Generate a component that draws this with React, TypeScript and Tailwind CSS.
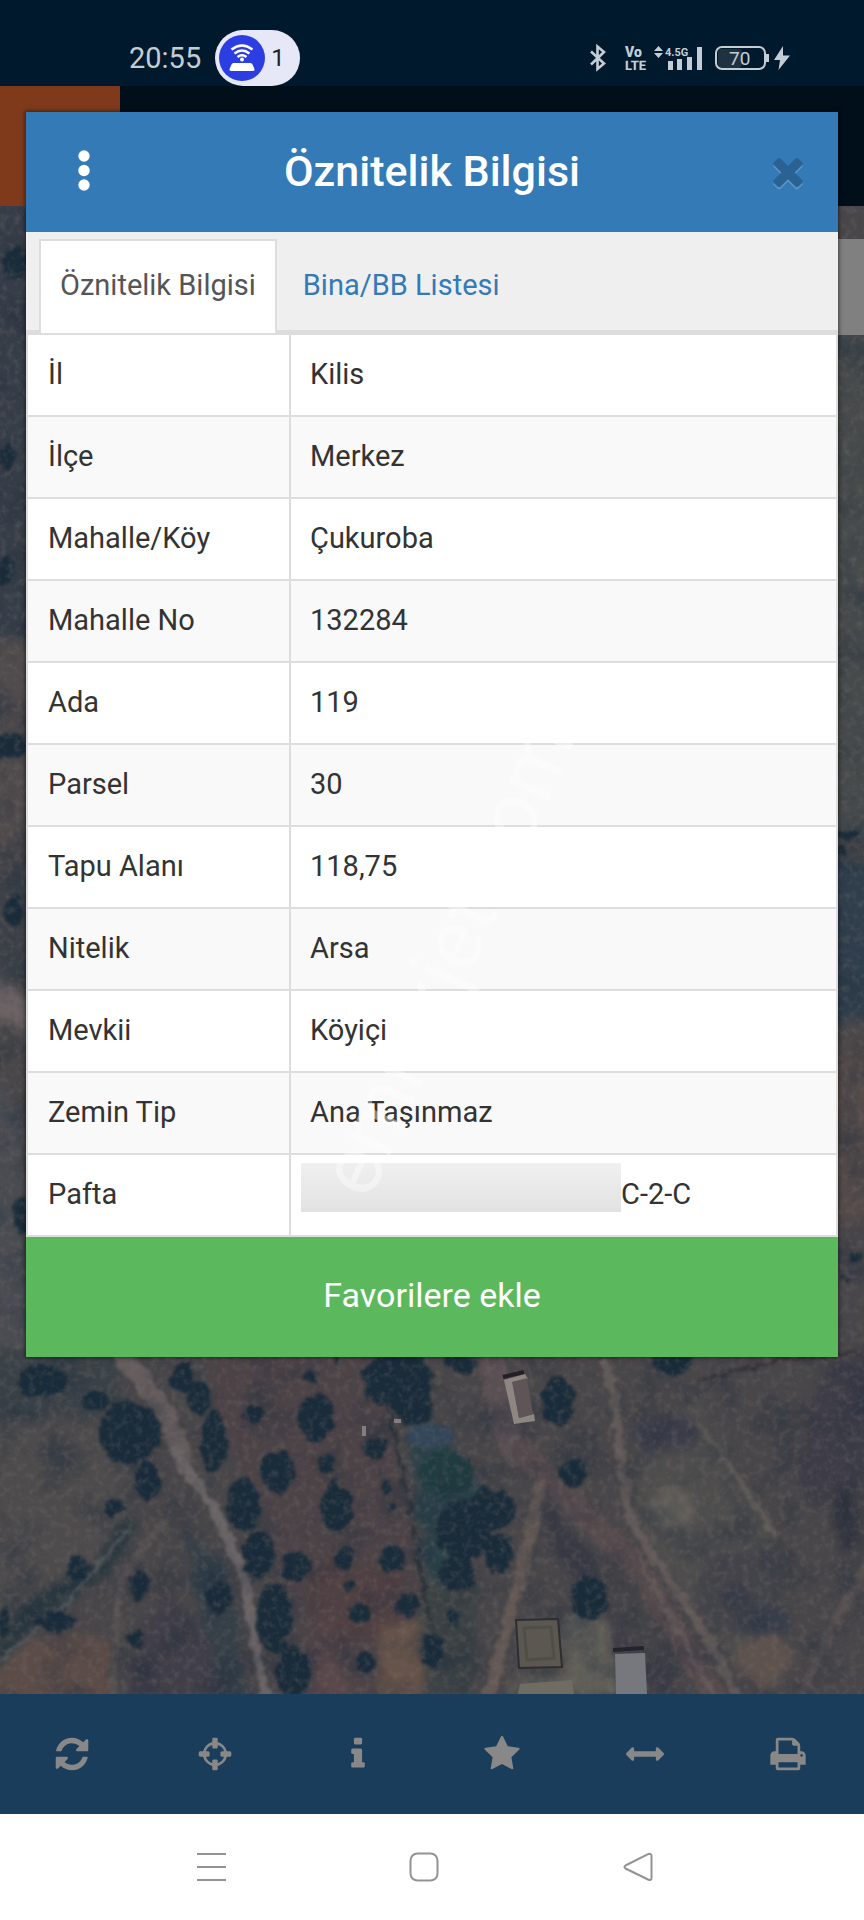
import React, { useState } from "react";

const rows = [
  ["İl", "Kilis"],
  ["İlçe", "Merkez"],
  ["Mahalle/Köy", "Çukuroba"],
  ["Mahalle No", "132284"],
  ["Ada", "119"],
  ["Parsel", "30"],
  ["Tapu Alanı", "118,75"],
  ["Nitelik", "Arsa"],
  ["Mevkii", "Köyiçi"],
  ["Zemin Tip", "Ana Taşınmaz"],
  ["Pafta", "C-2-C"],
];

const tools = [
  {
    label: "Yenile",
    path: "M1639 1056q0 5-1 7-64 268-268 434.5t-478 166.5q-146 0-282.5-55t-243.5-157l-129 129q-19 19-45 19t-45-19-19-45v-448q0-26 19-45t45-19h448q26 0 45 19t19 45-19 45l-137 137q71 66 161 102t187 36q134 0 250-65t186-179q11-17 53-117 8-23 30-23h192q13 0 22.5 9.5t9.5 22.5zm25-800v448q0 26-19 45t-45 19h-448q-26 0-45-19t-19-45 19-45l138-138q-148-137-349-137-134 0-250 65t-186 179q-11 17-53 117-8 23-30 23h-199q-13 0-22.5-9.5t-9.5-22.5v-7q65-268 270-434.5t480-166.5q146 0 284 55.5t245 156.5l130-129q19-19 45-19t45 19 19 45z",
  },
  {
    label: "Konum",
    path: "M1325 1024h-109q-26 0-45-19t-19-45v-128q0-26 19-45t45-19h109q-32-108-112.5-188.5t-188.5-112.5v109q0 26-19 45t-45 19h-128q-26 0-45-19t-19-45v-109q-108 32-188.5 112.5t-112.5 188.5h109q26 0 45 19t19 45v128q0 26-19 45t-45 19h-109q32 108 112.5 188.5t188.5 112.5v-109q0-26 19-45t45-19h128q26 0 45 19t19 45v109q108-32 188.5-112.5t112.5-188.5zm339-192v128q0 26-19 45t-45 19h-143q-37 161-154.5 278.5t-278.5 154.5v143q0 26-19 45t-45 19h-128q-26 0-45-19t-19-45v-143q-161-37-278.5-154.5t-154.5-278.5h-143q-26 0-45-19t-19-45v-128q0-26 19-45t45-19h143q37-161 154.5-278.5t278.5-154.5v-143q0-26 19-45t45-19h128q26 0 45 19t19 45v143q161 37 278.5 154.5t154.5 278.5h143q26 0 45 19t19 45z",
  },
  {
    label: "Bilgi",
    path: "M1216 1344v128q0 26-19 45t-45 19h-512q-26 0-45-19t-19-45v-128q0-26 19-45t45-19h64v-384h-64q-26 0-45-19t-19-45v-128q0-26 19-45t45-19h384q26 0 45 19t19 45v576h64q26 0 45 19t19 45zm-128-1152v192q0 26-19 45t-45 19h-256q-26 0-45-19t-19-45v-192q0-26 19-45t45-19h256q26 0 45 19t19 45z",
  },
  {
    label: "Favoriler",
    path: "M1728 647q0 22-26 48l-363 354 86 500q1 7 1 20 0 21-10.5 35.5t-30.5 14.5q-19 0-40-12l-449-236-449 236q-22 12-40 12-21 0-31.5-14.5t-10.5-35.5q0-6 2-20l86-500-364-354q-25-27-25-48 0-37 56-46l502-73 225-455q19-41 49-41t49 41l225 455 502 73q56 9 56 46z",
  },
  {
    label: "Ölçüm",
    path: "M1792 896q0 26-19 45l-256 256q-19 19-45 19t-45-19-19-45v-128h-1024v128q0 26-19 45t-45 19-45-19l-256-256q-19-19-19-45t19-45l256-256q19-19 45-19t45 19 19 45v128h1024v-128q0-26 19-45t45-19 45 19l256 256q19 19 19 45z",
  },
  {
    label: "Yazdır",
    path: "M448 1536h896v-256h-896v256zm0-640h896v-384h-160q-40 0-68-28t-28-68v-160h-640v640zm1152 64q0-26-19-45t-45-19-45 19-19 45 19 45 45 19 45-19 19-45zm128 0v416q0 13-9.5 22.5t-22.5 9.5h-224v160q0 40-28 68t-68 28h-960q-40 0-68-28t-28-68v-160h-224q-13 0-22.5-9.5t-9.5-22.5v-416q0-79 56.5-135.5t135.5-56.5h64v-544q0-40 28-68t68-28h672q40 0 88 20t76 48l152 152q28 28 48 76t20 88v256h64q79 0 135.5 56.5t56.5 135.5z",
  },
];

// cx, cy, rx, ry
const trees = [
  [41, 1380, 26, 17], [94, 1400, 16, 10], [129, 1432, 32, 32], [182, 1377, 13, 16],
  [198, 1397, 12, 18], [212, 1440, 14, 32], [253, 1415, 10, 11], [315, 1417, 19, 24],
  [276, 1470, 19, 21], [325, 1463, 9, 10], [335, 1507, 17, 23], [375, 1448, 13, 13],
  [310, 1376, 7, 6], [242, 1503, 18, 28], [258, 1553, 18, 24], [295, 1565, 16, 17],
  [343, 1558, 10, 12], [392, 1557, 13, 14], [359, 1612, 11, 12], [407, 1605, 12, 12],
  [364, 1660, 10, 11], [274, 1617, 18, 38], [292, 1670, 18, 26], [397, 1378, 36, 30],
  [413, 1407, 20, 18], [463, 1530, 28, 32], [490, 1508, 26, 22], [498, 1553, 16, 20],
  [457, 1573, 19, 18], [557, 1400, 17, 26], [573, 1472, 15, 15], [588, 1597, 20, 22],
  [113, 1506, 11, 9], [146, 1480, 14, 20], [77, 1568, 12, 14], [138, 1585, 12, 14],
  [217, 1597, 14, 16], [55, 1620, 22, 12], [385, 1486, 6, 6], [390, 1507, 5, 6],
  [347, 1583, 6, 6], [335, 1358, 4, 8], [335, 1484, 4, 8], [367, 1396, 4, 5],
  [135, 1638, 8, 9], [3, 1622, 6, 16], [672, 1360, 22, 14], [460, 1362, 16, 12],
  [14, 262, 14, 18], [8, 745, 20, 14], [12, 910, 12, 16], [4, 570, 10, 16],
  [20, 1215, 9, 20], [848, 834, 12, 6], [840, 850, 8, 6], [855, 1256, 6, 5],
  [843, 1278, 4, 4], [6, 455, 9, 14], [452, 1616, 8, 9], [432, 1650, 12, 18],
];

const MapView = () => (
  <svg
    className="absolute inset-0 h-full w-full"
    viewBox="0 206 864 1488"
    preserveAspectRatio="xMidYMid slice"
    aria-hidden="true"
  >
    <defs>
      <filter id="rough" x="-5%" y="-5%" width="110%" height="110%" colorInterpolationFilters="sRGB">
        <feTurbulence type="fractalNoise" baseFrequency="0.09" numOctaves="3" seed="4" result="n" />
        <feDisplacementMap in="SourceGraphic" in2="n" scale="12" xChannelSelector="R" yChannelSelector="G" />
        <feGaussianBlur stdDeviation="1.6" />
      </filter>
      <filter id="soft" x="-5%" y="-5%" width="110%" height="110%" colorInterpolationFilters="sRGB">
        <feTurbulence type="fractalNoise" baseFrequency="0.04" numOctaves="3" seed="9" result="n" />
        <feDisplacementMap in="SourceGraphic" in2="n" scale="22" xChannelSelector="R" yChannelSelector="G" />
        <feGaussianBlur stdDeviation="4" />
      </filter>
      <filter id="dark" x="0" y="0" width="100%" height="100%" colorInterpolationFilters="sRGB">
        <feTurbulence type="fractalNoise" baseFrequency="0.025" numOctaves="5" seed="21" />
        <feColorMatrix values="0 0 0 0 0.1  0 0 0 0 0.16  0 0 0 0 0.23  2.4 0 0 0 -1.1" />
      </filter>
      <filter id="light" x="0" y="0" width="100%" height="100%" colorInterpolationFilters="sRGB">
        <feTurbulence type="fractalNoise" baseFrequency="0.14" numOctaves="3" seed="33" />
        <feColorMatrix values="0 0 0 0 0.5  0 0 0 0 0.46  0 0 0 0 0.44  0 2.2 0 0 -1" />
      </filter>
    </defs>

    <rect y="206" width="864" height="1488" fill="#484649" />

    <g filter="url(#soft)">
      <path d="M-10 200h60v500h-60z" fill="#373d48" />
      <path d="M-10 640h60v60h-60zM-10 760h60v110h-60z" fill="#504b4c" />
      <path d="M-10 870h60v110h-60z" fill="#3e4248" />
      <path d="M-10 970L40 1010V1050L-10 1010z" fill="#6b6264" />
      <path d="M-10 1060L20 1110L24 1290L50 1350H-10z" fill="#4a4c52" />
      <path d="M830 330h50v510h-50z" fill="#464a4b" />
      <path d="M830 860h50v160h-50z" fill="#2f3e4c" />
      <path d="M830 1040h50v180h-50z" fill="#534a49" />

      <path d="M-10 1418L94 1425L132 1473L132 1527L88 1567L-10 1632z" fill="#4d4b4c" />
      <path d="M204 1350H364L397 1440L424 1607L418 1710H320L297 1623L264 1520L220 1423z" fill="#4c4347" />
      <path d="M300 1560L400 1570L410 1640L320 1650z" fill="#4f4043" />
      <path d="M330 1610L350 1710H306z" fill="#59474a" />
      <path d="M380 1628L426 1618L420 1710H376z" fill="#665349" />
      <path d="M-10 1655L33 1638L112 1632L112 1710H-10z" fill="#5b4c48" />
      <path d="M165 1592L208 1640L226 1710H126L140 1630z" fill="#403e48" />
      <path d="M180 1525L230 1570L246 1710H226L200 1610z" fill="#343f48" />
      <path d="M134 1520L100 1570L34 1610L-6 1662" fill="none" stroke="#2b383f" strokeWidth="20" />
      <path d="M408 1430L450 1440L490 1500L440 1600L424 1560z" fill="#2b4149" />
      <path d="M420 1580L480 1590L470 1700H424z" fill="#3d4345" />
      <path d="M-10 1350H110L130 1410L60 1420L-10 1416z" fill="#3b4247" />
      <path d="M640 1430L700 1400L790 1570L780 1694L720 1640L640 1540z" fill="#4e4d4d" />
      <ellipse cx="672" cy="1508" rx="22" ry="22" fill="#605d59" />
      <ellipse cx="666" cy="1433" rx="34" ry="20" fill="#3e3f4a" />
      <ellipse cx="740" cy="1590" rx="46" ry="40" fill="#43434a" />
      <ellipse cx="772" cy="1625" rx="18" ry="20" fill="#383e4a" />
      <path d="M838 1360Q796 1420 800 1490Q830 1530 870 1480V1350z" fill="#3e3d47" />
      <ellipse cx="846" cy="1520" rx="12" ry="34" fill="#31343f" />
      <path d="M540 1500L600 1560L600 1610L560 1560z" fill="#393a45" />
      <path d="M560 1620L612 1620L620 1694H510L512 1680L566 1672z" fill="#605e58" />
      <ellipse cx="764" cy="1660" rx="26" ry="24" fill="#5e524e" />
      <path d="M610 1610L680 1694H650L612 1650z" fill="#3f3d47" />
    </g>

    <g filter="url(#rough)" fill="none" strokeLinecap="round">
      <path d="M492 1350Q498 1410 516 1455" stroke="#5a4f53" strokeWidth="26" />
      <path d="M605 1360Q616 1400 620 1450T634 1527L705 1633L740 1700" stroke="#625a58" strokeWidth="9" />
      <path d="M522 1450L570 1500L640 1570L716 1700" stroke="#554a4d" strokeWidth="24" />
      <path d="M640 1560L716 1700" stroke="#625657" strokeWidth="6" />
      <path d="M540 1485Q524 1570 488 1700" stroke="#645955" strokeWidth="12" />
      <path d="M700 1425L746 1490L776 1536" stroke="#605c58" strokeWidth="5" />
      <path d="M870 1560L820 1650L800 1700" stroke="#554f50" strokeWidth="10" />
      <path d="M120 1350L168 1417L184 1463" stroke="#655c5d" strokeWidth="19" />
      <path d="M176 1450L220 1520L242 1570L266 1700" stroke="#6a6466" strokeWidth="9" />
      <path d="M164 1520L120 1580L112 1700" stroke="#555051" strokeWidth="6" />
      <path d="M388 1405L410 1510L430 1625" stroke="#2b3139" strokeWidth="4" />
      <path d="M700 1380L780 1360L864 1352" stroke="#333236" strokeWidth="4" />
      <path d="M128 1530L60 1610L0 1660" stroke="#50565a" strokeWidth="4" />
    </g>

    <g filter="url(#rough)" fill="#1a2c3a">
      {trees.map(([cx, cy, rx, ry]) => (
        <ellipse key={cx + "-" + cy} cx={cx + 1} cy={cy + 1} rx={rx - 1} ry={ry - 1} />
      ))}
      <ellipse cx="446" cy="1474" rx="26" ry="24" fill="#203c40" />
      <ellipse cx="430" cy="1436" rx="22" ry="12" fill="#34475a" />
    </g>

    <rect y="206" width="864" height="1488" filter="url(#dark)" opacity="0.4" />
    <rect y="206" width="864" height="1488" filter="url(#light)" opacity="0.3" />

    <path d="M504 1380L525 1374L528 1379L513 1382L519 1418L534 1414L535 1421L514 1424z" fill="#8d8782" />
    <path d="M512 1382L527 1378L533 1414L519 1418z" fill="#5f5557" />
    <path d="M503 1377L524 1372" stroke="#241f26" strokeWidth="4" />
    <path d="M516 1620L558 1619L562 1667L519 1668z" fill="#5c5851" stroke="#2c2e31" strokeWidth="2" />
    <path d="M524 1628L551 1627L554 1658L527 1660z" fill="none" stroke="#504e48" strokeWidth="3" />
    <path d="M615 1654L645 1653L647 1694H616z" fill="#77787d" />
    <path d="M613 1650L644 1648" stroke="#20242c" strokeWidth="4" />
    <path d="M520 1684L572 1680L574 1694H518z" fill="#6f6c64" />
    <path d="M362 1426h4v10h-4zM394 1419h7v4h-7z" fill="#807e80" />
  </svg>
);

const StatusBar = () => (
  <header className="flex h-[86px] items-center justify-between bg-[#00192c] pt-[30px] pr-[73px] pl-[129px] text-[#c3cdd5]">
    <div className="flex items-center gap-[14px]">
      <time className="text-[29px] leading-none">20:55</time>
      <div className="flex h-14 w-[85px] items-center gap-[6px] rounded-full bg-[#e6e8f8] pl-1">
        <svg className="size-[46px]" viewBox="0 0 46 46" aria-hidden="true">
          <circle cx="23" cy="23" r="23" fill="#2c3ee2" />
          <g fill="none" stroke="#fff" strokeWidth="2.4">
            <path d="M12.5 14.5Q23 6.5 33.5 14.5" />
            <path d="M15.5 18.5Q23 12.5 30.5 18.5" />
            <path d="M18.5 22Q23 18.5 27.5 22" />
          </g>
          <circle cx="23" cy="24.5" r="2" fill="#fff" />
          <path d="M14.5 28h17q1.5 0 2 1.5l2 4.5q.5 2-1.5 2h-22q-2 0-1.500-2l2-4.500q.5-1.500 2-1.500z" fill="#fff" />
        </svg>
        <span className="text-[24px] leading-none text-[#222]">1</span>
      </div>
    </div>
    <svg className="h-[30px] w-[202px]" viewBox="0 0 202 30" fill="currentColor" aria-label="Bluetooth, VoLTE, 4.5G, 70%">
      <path d="M2 8.5L15 20.5L8.5 26V3.5L15 9L2 21.5" fill="none" stroke="currentColor" strokeWidth="2.6" />
      <text x="36" y="14" fontSize="14" fontWeight="900">Vo</text>
      <text x="36" y="27" fontSize="13" fontWeight="800" textRendering="geometricPrecision">LTE</text>
      <path d="M65 8l4.500-5 4.500 5zM65 10h9l-4.500 5z" />
      <text x="76" y="13" fontSize="11" fontWeight="700">4.5G</text>
      <path d="M79 18h5v9h-5zM88 16h5v11h-5zM98 14h5v13h-5zM108 4h5v23h-5z" />
      <rect x="129" y="6" width="24" height="19" rx="4" fill="#20323f" />
      <rect x="127" y="4" width="49" height="22" rx="6" fill="none" stroke="currentColor" strokeWidth="2" />
      <path d="M177 11h3v8h-3z" />
      <text x="140" y="22" fontSize="19">70</text>
      <path d="M194 3L185 17h6l-1.500 10L201 12.500h-7z" />
    </svg>
  </header>
);

const crossPath =
  "M1490 1322q0 40-28 68l-136 136q-28 28-68 28t-68-28l-294-294-294 294q-28 28-68 28t-68-28l-136-136q-28-28-28-68t28-68l294-294-294-294q-28-28-28-68t28-68l136-136q28-28 68-28t68 28l294 294 294-294q28-28 68-28t68 28l136 136q28 28 28 68t-28 68l-294 294 294 294q28 28 28 68z";

const Dialog = () => {
  const [tab, setTab] = useState("info");
  const active = "-mb-[3px] border-[#ddd] bg-white text-[#555]";
  const passive = "border-transparent text-[#337ab7]";

  return (
    <section
      role="dialog"
      aria-label="Öznitelik Bilgisi"
      className="absolute inset-x-[26px] top-[26px] bg-[#efefef] shadow-[0_0_4px_1px_rgba(0,0,0,0.5)]"
    >
      <div className="flex h-[120px] items-center justify-between bg-[#347ab7] px-[33px] pb-[2px] text-white">
        <button type="button" aria-label="Menü" className="flex w-[50px] justify-center">
          <svg className="h-[42px] w-3" viewBox="0 0 12 42" fill="currentColor">
            <circle cx="6" cy="6" r="5.7" />
            <circle cx="6" cy="20.5" r="5.7" />
            <circle cx="6" cy="35" r="5.7" />
          </svg>
        </button>
        <h1 className="text-[43px] leading-none font-medium">Öznitelik Bilgisi</h1>
        <button type="button" aria-label="Kapat" className="flex w-[50px] justify-end">
          <svg className="size-[44px] translate-x-[5px]" viewBox="0 0 1792 1792">
            <path transform="translate(0 90)" d={crossPath} fill="#5b95c6" />
            <path d={crossPath} fill="#2a6294" />
          </svg>
        </button>
      </div>

      <div role="tablist" className="flex items-stretch gap-[5px] border-b-[3px] border-[#ddd] px-[13px] pt-[7px] text-[29px] leading-[41px]">
        <button
          type="button"
          role="tab"
          aria-selected={tab === "info"}
          onClick={() => setTab("info")}
          className={`h-[94px] border-2 border-b-0 px-[19px] pb-1 ${tab === "info" ? active : passive}`}
        >
          Öznitelik Bilgisi
        </button>
        <button
          type="button"
          role="tab"
          aria-selected={tab === "list"}
          onClick={() => setTab("list")}
          className={`border-2 border-b-0 px-[19px] ${tab === "list" ? active : passive}`}
        >
          Bina/BB Listesi
        </button>
      </div>

      <table className="w-full table-fixed border-collapse border-2 border-[#ddd] bg-white text-[29px] leading-[41px] text-[#333]">
        <tbody>
          {rows.map(([label, value]) => (
            <tr key={label} className="h-[82px] even:bg-[#f9f9f9]">
              <th scope="row" className="w-[263px] border-2 border-[#ddd] px-5 pb-px text-left font-normal">
                {label}
              </th>
              {label === "Pafta" ? (
                <td className="border-2 border-[#ddd] px-[10px] pb-[2px]">
                  <div className="flex items-center">
                    <span className="mb-[14px] h-[49px] w-[320px] bg-linear-to-b from-[#f0f0f0] to-[#e2e2e2]" />
                    {value}
                  </div>
                </td>
              ) : (
                <td className="border-2 border-[#ddd] px-[19px] pb-px">{value}</td>
              )}
            </tr>
          ))}
        </tbody>
      </table>

      <span className="pointer-events-none absolute top-[1036px] left-[318px] origin-left -rotate-66 text-[84px] leading-none text-white/40">
        emlakjet.com
      </span>

      <button type="button" className="block h-[120px] w-full bg-[#5cb85c] pb-1 text-[34px] text-white">
        Favorilere ekle
      </button>
    </section>
  );
};

const App = () => {
  return (
    <div className="flex min-h-screen flex-col bg-[#000f1a] font-['Roboto',sans-serif]">
      <StatusBar />

      <main className="relative flex flex-1 flex-col">
        <div className="h-[120px] w-[120px] bg-[#7f3a1b]" />
        <div className="relative min-h-[1200px] flex-1 overflow-hidden">
          <MapView />
          <div className="absolute top-[33px] right-0 h-24 w-12 bg-[#808080]" />
        </div>
        <Dialog />
      </main>

      <div className="grid h-[120px] grid-cols-6 bg-[#1b3d5c] pr-1 text-[#888]">
        {tools.map((t) => (
          <button key={t.label} type="button" aria-label={t.label} className="flex items-center justify-center">
            <svg className="size-[38px]" viewBox="0 0 1792 1792" fill="currentColor">
              <path d={t.path} />
            </svg>
          </button>
        ))}
      </div>

      <nav className="grid h-[106px] grid-cols-3 bg-white pr-[119px] pl-[104px] text-[#939393]">
        <button type="button" aria-label="Son uygulamalar" className="flex items-center justify-center">
          <svg className="size-[30px]" viewBox="0 0 30 30" stroke="currentColor" strokeWidth="2">
            <path d="M1 2h29M1 15h29M1 28h29" />
          </svg>
        </button>
        <button type="button" aria-label="Ana ekran" className="flex items-center justify-center">
          <svg className="size-[30px]" viewBox="0 0 30 30" fill="none" stroke="currentColor" strokeWidth="2">
            <rect x="1.5" y="1.5" width="27" height="27" rx="7" />
          </svg>
        </button>
        <button type="button" aria-label="Geri" className="flex items-center justify-center">
          <svg className="size-[30px]" viewBox="0 0 30 30" fill="none" stroke="currentColor" strokeWidth="2" strokeLinejoin="round">
            <path d="M2.5 13.5L25 2.2Q28.5 1 28.5 4V26Q28.5 29 25 27.5L2.5 16.5Q.5 15 2.5 13.5z" />
          </svg>
        </button>
      </nav>
    </div>
  );
};

export default App;
